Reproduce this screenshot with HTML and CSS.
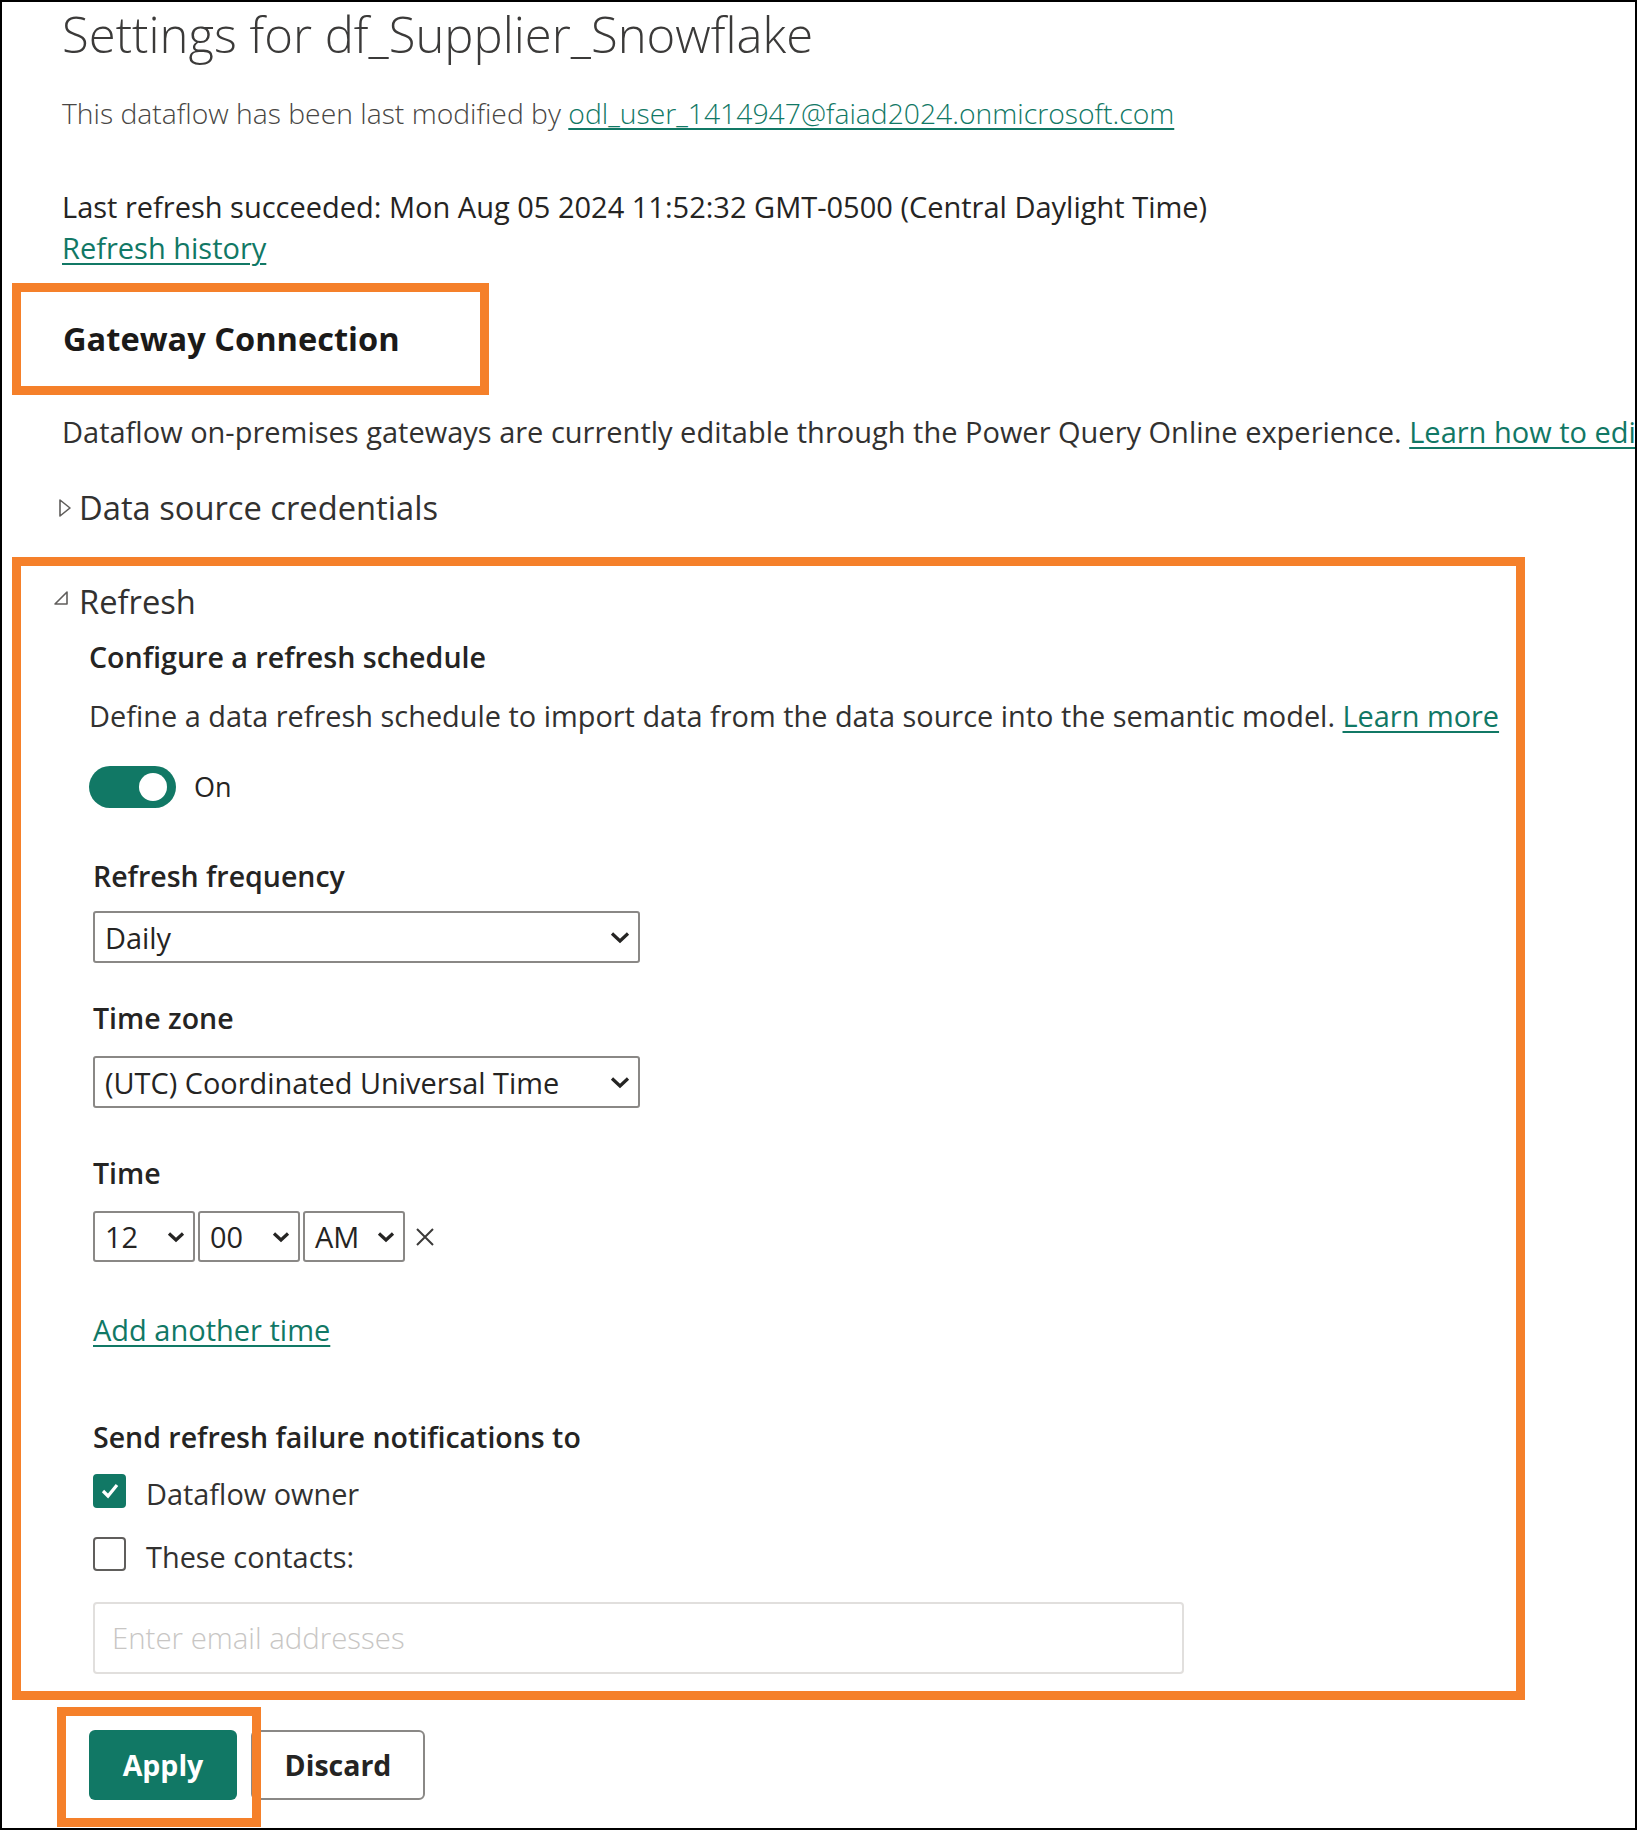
FILE: index.html
```html
<!DOCTYPE html>
<html lang="en">
<head>
<meta charset="utf-8">
<title>Settings for df_Supplier_Snowflake</title>
<link rel="stylesheet" href="styles.css">
</head>
<body>
<div class="frame">
  <h1 class="title">Settings for df_Supplier_Snowflake</h1>
  <p class="modified">This dataflow has been last modified by <a class="link" href="#">odl_user_1414947@faiad2024.onmicrosoft.com</a></p>
  <p class="last-refresh">Last refresh succeeded: Mon Aug 05 2024 11:52:32 GMT-0500 (Central Daylight Time)<br><a class="link" href="#">Refresh history</a></p>

  <div class="hl hl-gateway"><h2 class="gateway-title">Gateway Connection</h2></div>

  <p class="note">Dataflow on-premises gateways are currently editable through the Power Query Online experience. <a class="link" href="#">Learn how to edit</a></p>

  <div class="expander expander-sources">
    <svg class="tri-right" width="14" height="20" viewBox="0 0 14 20"><polygon points="2,2 12,10 2,18" fill="none" stroke="#605e5c" stroke-width="1.6" stroke-linejoin="round"/></svg>
    <span>Data source credentials</span>
  </div>

  <div class="hl hl-refresh">
    <div class="expander expander-refresh">
      <svg class="tri-down" width="18" height="16" viewBox="0 0 18 16"><polygon points="15,2 15,14 3,14" fill="none" stroke="#605e5c" stroke-width="1.6" stroke-linejoin="round"/></svg>
      <span>Refresh</span>
    </div>
    <div class="refresh-body">
      <h3 class="sub-title">Configure a refresh schedule</h3>
      <p class="desc">Define a data refresh schedule to import data from the data source into the semantic model. <a class="link" href="#">Learn more</a></p>
      <div class="toggle-row">
        <span class="toggle"><span class="knob"></span></span>
        <span class="toggle-text">On</span>
      </div>

      <div class="fields">
        <div class="label label-freq">Refresh frequency</div>
        <div class="select select-wide select-first">
          <span>Daily</span>
          <svg width="20" height="13" viewBox="0 0 20 13"><polyline points="2,2.5 10,10 18,2.5" fill="none" stroke="#252423" stroke-width="3.2"/></svg>
        </div>

        <div class="label label-tz">Time zone</div>
        <div class="select select-wide select-tz">
          <span>(UTC) Coordinated Universal Time</span>
          <svg width="20" height="13" viewBox="0 0 20 13"><polyline points="2,2.5 10,10 18,2.5" fill="none" stroke="#252423" stroke-width="3.2"/></svg>
        </div>

        <div class="label label-time">Time</div>
        <div class="time-row">
          <div class="select select-small">
            <span>12</span>
            <svg width="18" height="12" viewBox="0 0 18 12"><polyline points="2,2.5 9,9 16,2.5" fill="none" stroke="#252423" stroke-width="3.2"/></svg>
          </div>
          <div class="select select-small">
            <span>00</span>
            <svg width="18" height="12" viewBox="0 0 18 12"><polyline points="2,2.5 9,9 16,2.5" fill="none" stroke="#252423" stroke-width="3.2"/></svg>
          </div>
          <div class="select select-small">
            <span>AM</span>
            <svg width="18" height="12" viewBox="0 0 18 12"><polyline points="2,2.5 9,9 16,2.5" fill="none" stroke="#252423" stroke-width="3.2"/></svg>
          </div>
          <svg class="remove" width="22" height="22" viewBox="0 0 22 22"><path d="M3 3 L19 19 M19 3 L3 19" stroke="#3b3a39" stroke-width="2"/></svg>
        </div>

        <a class="link add-time" href="#">Add another time</a>

        <div class="label label-notify">Send refresh failure notifications to</div>
        <div class="check-row check-first">
          <span class="checkbox checked"><svg width="22" height="22" viewBox="0 0 22 22"><polyline points="4,11 9,16 18,5" fill="none" stroke="#fff" stroke-width="3.2"/></svg></span>
          <span class="check-text">Dataflow owner</span>
        </div>
        <div class="check-row check-second">
          <span class="checkbox"></span>
          <span class="check-text">These contacts:</span>
        </div>
        <div class="email-input">Enter email addresses</div>
      </div>
    </div>
  </div>

  <div class="actions">
    <button class="btn btn-primary">Apply</button>
    <button class="btn btn-secondary">Discard</button>
  </div>
</div>
</body>
</html>
```

FILE: styles.css
```css
html, body {
  margin: 0;
  padding: 0;
  background: #ffffff;
}

.frame {
  width: 1637px;
  height: 1830px;
  box-sizing: border-box;
  border: 2px solid #000000;
  overflow: hidden;
  background: #ffffff;
  font-family: "Open Sans", "Noto Sans", sans-serif;
  color: #252423;
}

.title {
  margin: 2px 0 0 60px;
  font-size: 49px;
  font-weight: 300;
  line-height: 60px;
  color: #3b3a39;
  white-space: nowrap;
}

.modified {
  margin: 31px 0 0 60px;
  font-size: 28.3px;
  font-weight: 300;
  line-height: 36px;
  color: #484644;
  white-space: nowrap;
}

.last-refresh {
  margin: 55px 0 0 60px;
  font-size: 29px;
  line-height: 41px;
  color: #252423;
  white-space: nowrap;
}

.link {
  color: #117865;
  text-decoration: underline;
  text-underline-offset: 4px;
  text-decoration-thickness: 1.5px;
}

.hl {
  box-sizing: border-box;
  border: 9px solid #f5802a;
  margin-left: 10px;
}

.hl-gateway {
  width: 477px;
  height: 112px;
  margin-top: 15px;
  padding-left: 42px;
}

.gateway-title {
  margin: 0;
  font-size: 32.6px;
  font-weight: 700;
  line-height: 94px;
  color: #1b1a19;
  white-space: nowrap;
}

.note {
  margin: 17px 0 0 60px;
  font-size: 29px;
  line-height: 40px;
  white-space: nowrap;
  color: #323130;
}

.expander {
  display: flex;
  align-items: center;
  font-size: 32.7px;
  line-height: 44px;
  color: #323130;
  white-space: nowrap;
}

.expander-sources {
  margin: 34px 0 0 56px;
}

.tri-right {
  margin-right: 7px;
}

.hl-refresh {
  width: 1513px;
  margin-top: 27px;
  padding: 14px 0 17px 0;
}

.expander-refresh {
  margin-left: 31px;
}

.tri-down {
  margin-right: 9px;
  margin-bottom: 8px;
}

.refresh-body {
  padding-left: 68px;
}

.sub-title {
  margin: 14px 0 0 0;
  font-size: 28.6px;
  font-weight: 600;
  line-height: 38px;
  color: #252423;
}

.desc {
  margin: 21px 0 0 0;
  font-size: 28.9px;
  line-height: 38px;
  white-space: nowrap;
  color: #323130;
}

.toggle-row {
  display: flex;
  align-items: center;
  margin-top: 31px;
  height: 42px;
}

.toggle {
  position: relative;
  width: 87px;
  height: 42px;
  border-radius: 21px;
  background: #117865;
}

.knob {
  position: absolute;
  right: 9px;
  top: 7px;
  width: 28px;
  height: 28px;
  border-radius: 50%;
  background: #ffffff;
}

.toggle-text {
  margin-left: 18px;
  font-size: 27px;
  line-height: 42px;
  color: #252423;
}

.fields {
  padding-left: 4px;
}

.label {
  font-size: 28.5px;
  font-weight: 600;
  line-height: 38px;
  color: #252423;
  white-space: nowrap;
}

.label-freq { margin-top: 49px; }
.label-tz { margin-top: 36px; }
.label-time { margin-top: 46px; }
.label-notify { margin-top: 69px; }

.select {
  box-sizing: border-box;
  display: flex;
  align-items: center;
  justify-content: space-between;
  border: 2px solid #8a8886;
  border-radius: 3px;
  background: #ffffff;
  font-size: 28.9px;
  color: #252423;
  padding: 0 8px 0 10px;
  white-space: nowrap;
}

.select-wide {
  width: 547px;
  height: 52px;
}

.select-first { margin-top: 16px; }
.select-tz { margin-top: 19px; }

.time-row {
  display: flex;
  align-items: center;
  gap: 3px;
  margin-top: 19px;
}

.select-small {
  width: 102px;
  height: 51px;
  padding-right: 8px;
}

.remove {
  margin-left: 6px;
}

.add-time {
  display: block;
  width: max-content;
  margin-top: 49px;
  font-size: 29px;
  line-height: 38px;
}

.check-row {
  display: flex;
  align-items: center;
  height: 34px;
}

.check-first { margin-top: 18px; }
.check-second { margin-top: 29px; }

.checkbox {
  box-sizing: border-box;
  display: flex;
  align-items: center;
  justify-content: center;
  width: 33px;
  height: 34px;
  border: 2px solid #605e5c;
  border-radius: 4px;
  background: #ffffff;
}

.checkbox.checked {
  border-color: #117865;
  background: #117865;
}

.check-text {
  margin-left: 20px;
  padding-top: 6px;
  font-size: 28.9px;
  line-height: 34px;
  color: #323130;
  white-space: nowrap;
}

.email-input {
  box-sizing: border-box;
  width: 1091px;
  height: 72px;
  margin-top: 31px;
  padding-left: 17px;
  border: 2px solid #e1dfdd;
  border-radius: 4px;
  font-size: 29.4px;
  font-weight: 300;
  line-height: 68px;
  color: #c8c6c4;
  white-space: nowrap;
}

.actions {
  display: flex;
  gap: 14px;
  margin: 30px 0 0 87px;
}

.btn {
  box-sizing: border-box;
  height: 70px;
  border-radius: 6px;
  font-family: "Open Sans", "Noto Sans", sans-serif;
  font-size: 28.5px;
  font-weight: 700;
  padding: 0;
}

.btn-primary {
  position: relative;
  width: 148px;
  border: none;
  background: #117865;
  color: #ffffff;
}

.btn-primary::after {
  content: "";
  position: absolute;
  top: -23px;
  left: -32px;
  right: -24px;
  bottom: -27px;
  border: 9px solid #f5802a;
}

.btn-secondary {
  width: 174px;
  border: 2px solid #8a8886;
  background: #ffffff;
  color: #252423;
}
```
